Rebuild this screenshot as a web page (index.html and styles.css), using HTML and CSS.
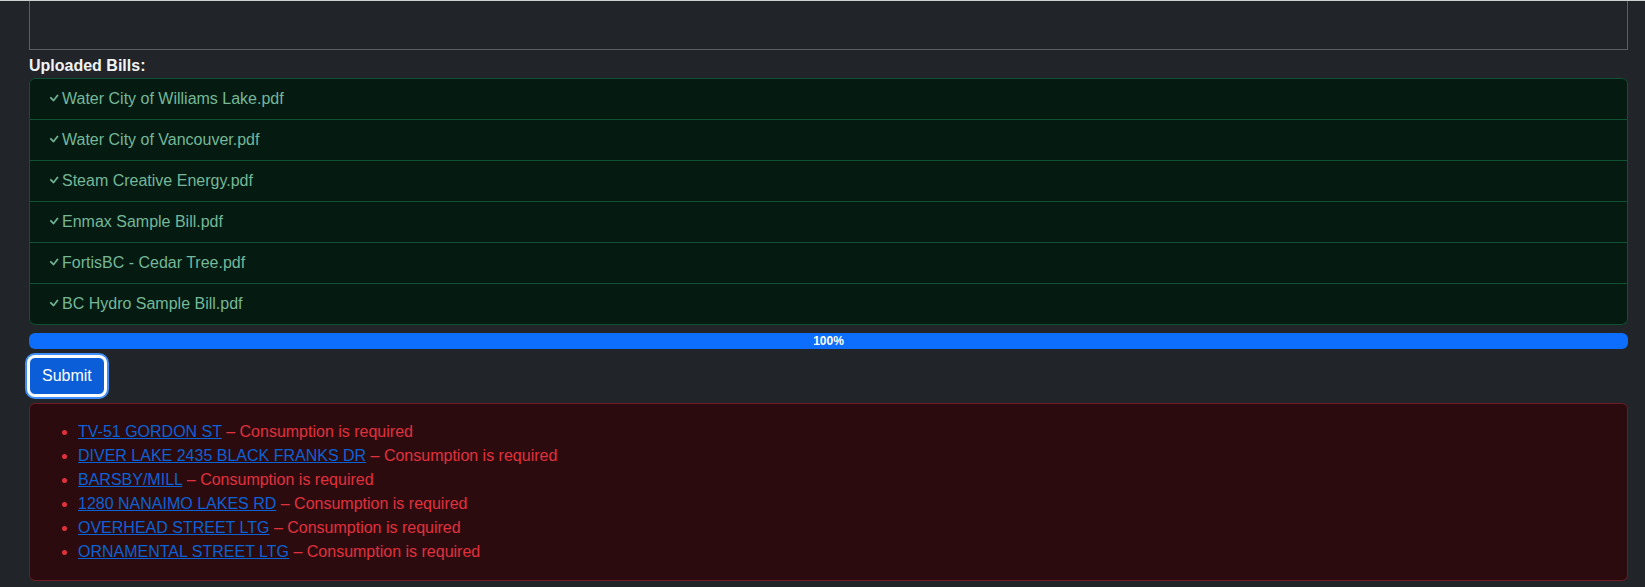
FILE: index.html
```html
<!DOCTYPE html>
<html lang="en">
<head>
<meta charset="utf-8">
<title>Upload Bills</title>
<link rel="stylesheet" href="styles.css">
</head>
<body>
<div class="page">
  <div class="content">
    <div class="notes"></div>
    <div class="label">Uploaded Bills:</div>
    <ul class="files">
      <li class="file"><svg class="check" viewBox="0 0 16 16" width="16" height="16"><path d="M10.97 4.97a.75.75 0 0 1 1.07 1.05l-3.99 4.99a.75.75 0 0 1-1.08.02L4.324 8.384a.75.75 0 1 1 1.06-1.06l2.094 2.093 3.473-4.425z"/></svg>Water City of Williams Lake.pdf</li>
      <li class="file"><svg class="check" viewBox="0 0 16 16" width="16" height="16"><path d="M10.97 4.97a.75.75 0 0 1 1.07 1.05l-3.99 4.99a.75.75 0 0 1-1.08.02L4.324 8.384a.75.75 0 1 1 1.06-1.06l2.094 2.093 3.473-4.425z"/></svg>Water City of Vancouver.pdf</li>
      <li class="file"><svg class="check" viewBox="0 0 16 16" width="16" height="16"><path d="M10.97 4.97a.75.75 0 0 1 1.07 1.05l-3.99 4.99a.75.75 0 0 1-1.08.02L4.324 8.384a.75.75 0 1 1 1.06-1.06l2.094 2.093 3.473-4.425z"/></svg>Steam Creative Energy.pdf</li>
      <li class="file"><svg class="check" viewBox="0 0 16 16" width="16" height="16"><path d="M10.97 4.97a.75.75 0 0 1 1.07 1.05l-3.99 4.99a.75.75 0 0 1-1.08.02L4.324 8.384a.75.75 0 1 1 1.06-1.06l2.094 2.093 3.473-4.425z"/></svg>Enmax Sample Bill.pdf</li>
      <li class="file"><svg class="check" viewBox="0 0 16 16" width="16" height="16"><path d="M10.97 4.97a.75.75 0 0 1 1.07 1.05l-3.99 4.99a.75.75 0 0 1-1.08.02L4.324 8.384a.75.75 0 1 1 1.06-1.06l2.094 2.093 3.473-4.425z"/></svg>FortisBC - Cedar Tree.pdf</li>
      <li class="file"><svg class="check" viewBox="0 0 16 16" width="16" height="16"><path d="M10.97 4.97a.75.75 0 0 1 1.07 1.05l-3.99 4.99a.75.75 0 0 1-1.08.02L4.324 8.384a.75.75 0 1 1 1.06-1.06l2.094 2.093 3.473-4.425z"/></svg>BC Hydro Sample Bill.pdf</li>
    </ul>
    <div class="progress"><div class="progress-bar" style="width: 100%">100%</div></div>
    <div class="actions"><button class="btn" type="button">Submit</button></div>
    <div class="alert">
      <ul class="errors">
        <li><a href="#">TV-51 GORDON ST</a> – Consumption is required</li>
        <li><a href="#">DIVER LAKE 2435 BLACK FRANKS DR</a> – Consumption is required</li>
        <li><a href="#">BARSBY/MILL</a> – Consumption is required</li>
        <li><a href="#">1280 NANAIMO LAKES RD</a> – Consumption is required</li>
        <li><a href="#">OVERHEAD STREET LTG</a> – Consumption is required</li>
        <li><a href="#">ORNAMENTAL STREET LTG</a> – Consumption is required</li>
      </ul>
    </div>
  </div>
</div>
</body>
</html>
```
FILE: styles.css
```css
* { box-sizing: border-box; }
html, body {
  margin: 0;
  padding: 0;
  background: #212529;
}
body {
  font-family: "Liberation Sans", Arial, sans-serif;
  font-size: 16px;
  line-height: 24px;
  color: #dee2e6;
}
.page {
  border-top: 1px solid #cfd0d2;
  min-height: 587px;
}
.content {
  padding: 0 17px 0 29px;
  display: flex;
  flex-direction: column;
}
.notes {
  height: 49px;
  border: 1px solid #5c6065;
  border-top: 0;
}
.label {
  margin-top: 4px;
  font-weight: 700;
  color: #f1f3f5;
}
.files {
  list-style: none;
  margin: 0;
  padding: 0;
  border-radius: 6px;
  overflow: hidden;
}
.file {
  padding: 8px 16px;
  background: #051b11;
  color: #75b798;
  border: 1px solid #0f5132;
  border-top-width: 0;
}
.file:first-child {
  border-top-width: 1px;
  border-radius: 6px 6px 0 0;
}
.file:last-child {
  border-radius: 0 0 6px 6px;
}
.check {
  width: 16px;
  height: 16px;
  vertical-align: -2px;
  fill: #75b798;
  stroke: #75b798;
  stroke-width: 0.3;
}
.progress {
  margin-top: 8px;
  height: 16px;
  border-radius: 6px;
  background: #343a40;
  overflow: hidden;
  display: flex;
}
.progress-bar {
  background: #0d6efd;
  color: #fff;
  font-size: 12px;
  font-weight: 700;
  line-height: 16px;
  text-align: center;
}
.actions {
  margin-top: 8px;
  display: flex;
}
.btn {
  font-family: "Liberation Sans", Arial, sans-serif;
  font-size: 16px;
  line-height: 24px;
  padding: 6px 12px;
  height: 38px;
  border: 1px solid #fff;
  border-radius: 6px;
  background: #0b5ed7;
  color: #fff;
  box-shadow: 0 0 0 2px #ffffff, 0 0 0 4px #3f8ffa;
}
.alert {
  margin-top: 8px;
  padding: 16px;
  border: 1px solid #6e1b23;
  border-radius: 6px;
  background: #2c0b0e;
  color: #e0313f;
}
.errors {
  margin: 0;
  padding-left: 32px;
}
.errors li::marker {
  color: #e0313f;
}
.errors a {
  color: #0b62d6;
  text-decoration: underline;
}
```
